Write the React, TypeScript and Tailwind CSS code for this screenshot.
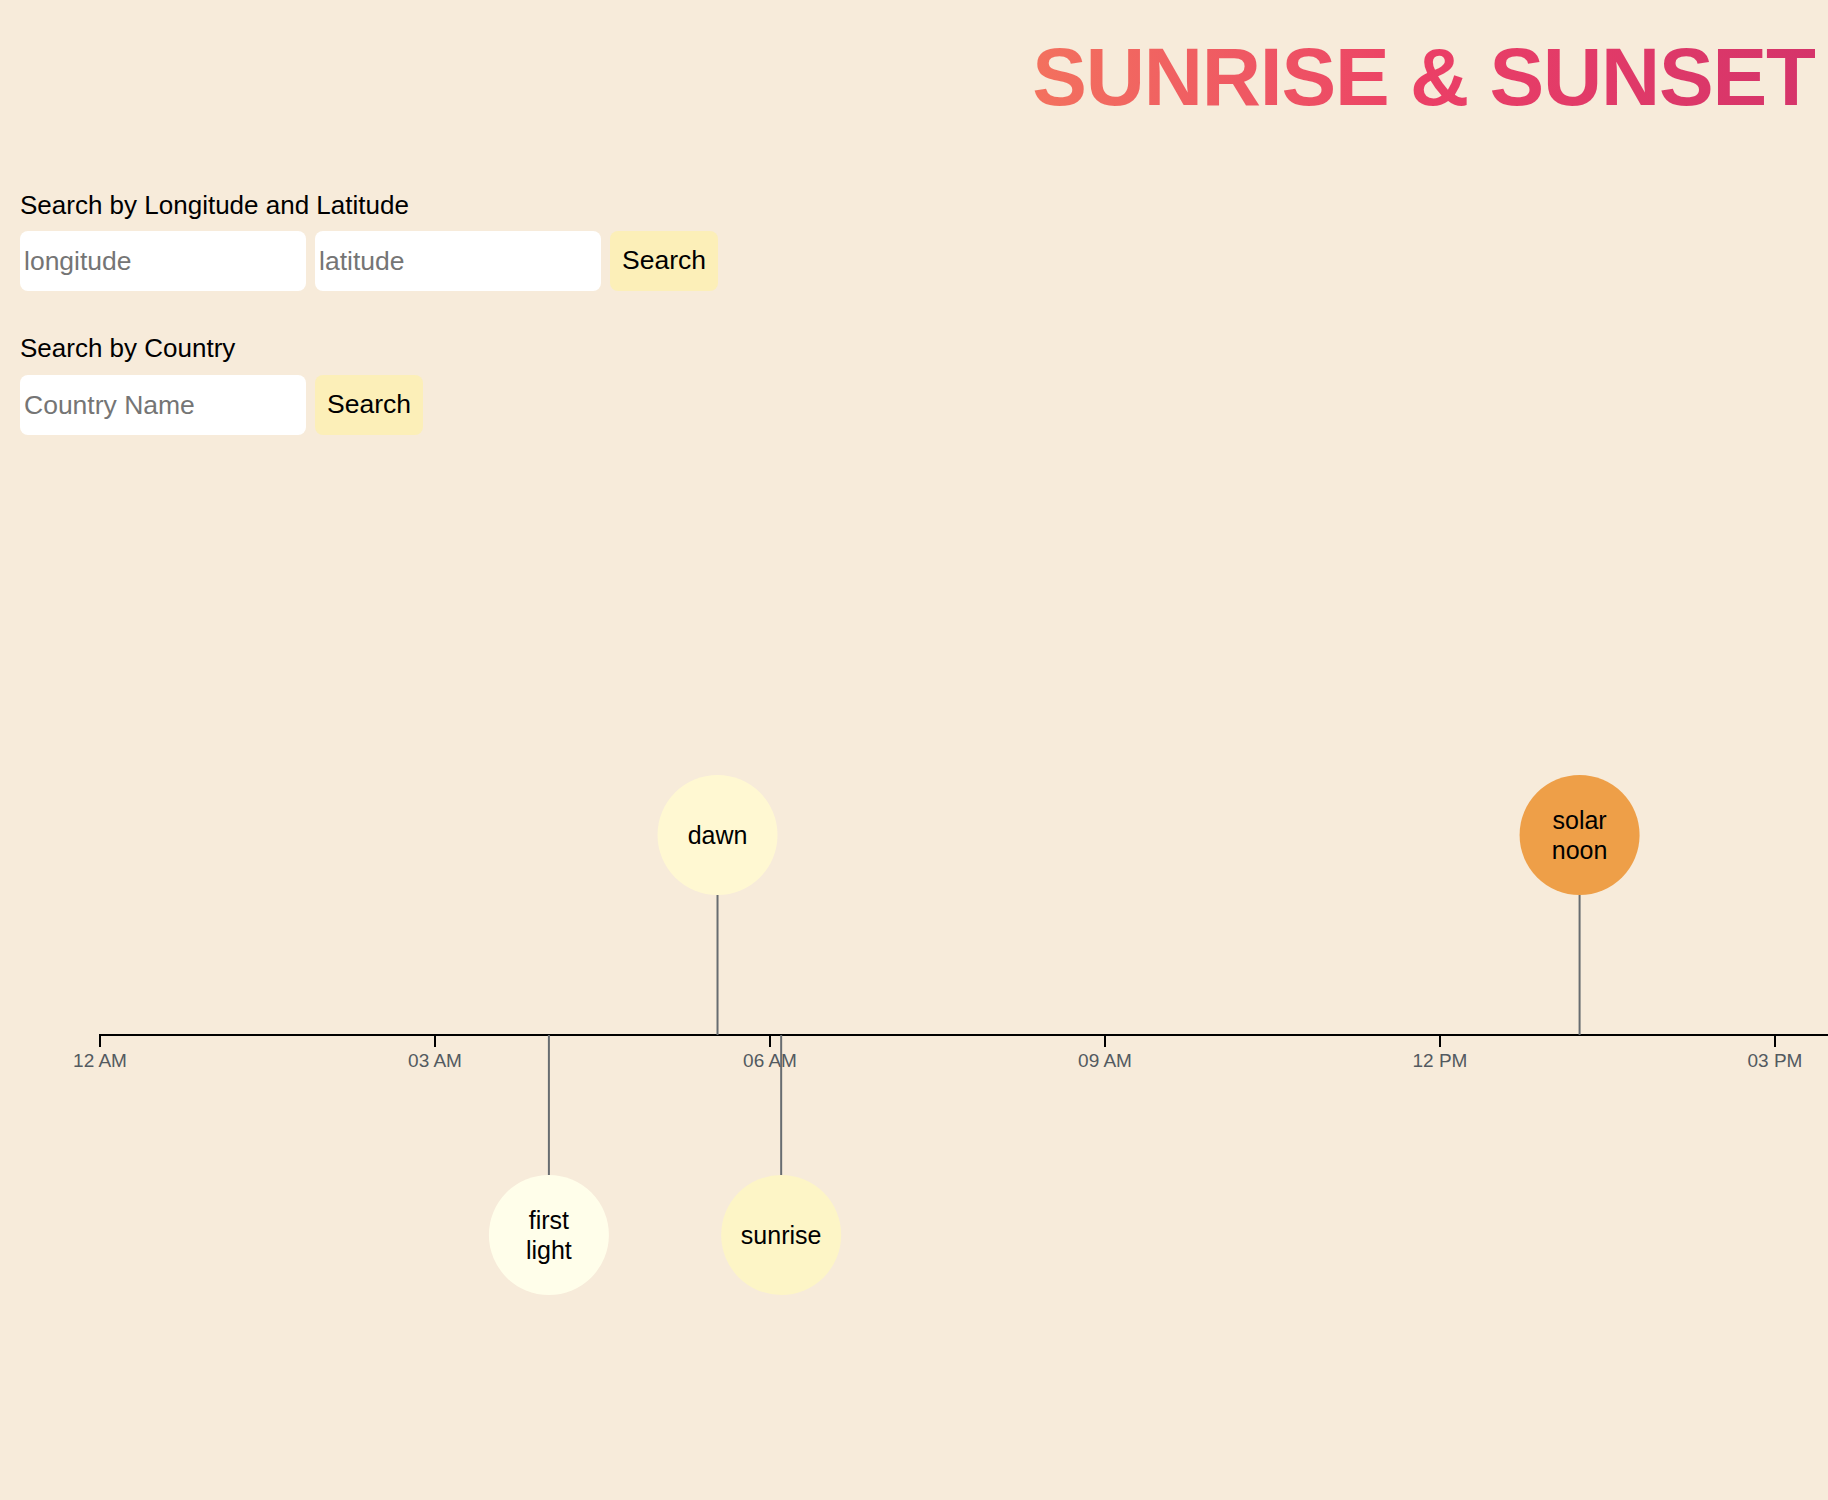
const events = [
  { label: ["first", "light"], hour: 4.02, side: "below", fill: "#fffeea" },
  { label: ["dawn"], hour: 5.53, side: "above", fill: "#fff8d2" },
  { label: ["sunrise"], hour: 6.1, side: "below", fill: "#fdf5c6" },
  { label: ["solar", "noon"], hour: 13.25, side: "above", fill: "#ee9f48" },
];

const ticks = ["12 AM", "03 AM", "06 AM", "09 AM", "12 PM", "03 PM"];

// svg sits at page y=700, axis at y=335 inside it
const AXIS_Y = 335;
const x = (h: number) => 100 + (h * 335) / 3;

function Timeline() {
  return (
    <svg width={1828} height={700} className="block">
      <line x1={99} x2={1828} y1={AXIS_Y} y2={AXIS_Y} stroke="#000" strokeWidth={2} />
      {ticks.map((t, i) => {
        const tx = 100 + i * 335;
        return (
          <g key={t}>
            <line x1={tx} x2={tx} y1={AXIS_Y} y2={AXIS_Y + 12} stroke="#000" strokeWidth={2} />
            <text x={tx} y={AXIS_Y + 32} textAnchor="middle" fontSize={19} fill="#535a60">
              {t}
            </text>
          </g>
        );
      })}
      {events.map((e) => {
        const ex = x(e.hour);
        const cy = e.side === "above" ? AXIS_Y - 200 : AXIS_Y + 200;
        const y1 = e.side === "above" ? cy + 60 : AXIS_Y;
        const y2 = e.side === "above" ? AXIS_Y : cy - 60;
        return (
          <g key={e.label.join(" ")}>
            <line x1={ex} x2={ex} y1={y1} y2={y2} stroke="#676c70" strokeWidth={2} />
            <circle cx={ex} cy={cy} r={60} fill={e.fill} />
            {e.label.length === 1 ? (
              <text x={ex} y={cy + 8.7} textAnchor="middle" fontSize={25} fill="#000">
                {e.label[0]}
              </text>
            ) : (
              <>
                <text x={ex} y={cy - 6} textAnchor="middle" fontSize={25} fill="#000">
                  {e.label[0]}
                </text>
                <text x={ex} y={cy + 24} textAnchor="middle" fontSize={25} fill="#000">
                  {e.label[1]}
                </text>
              </>
            )}
          </g>
        );
      })}
    </svg>
  );
}

export default function App() {
  return (
    <div className="min-h-[1500px] bg-[#f7ebda] font-['Liberation_Sans',Arial,Helvetica,sans-serif] text-black overflow-hidden">
      {/* Header */}
      <header className="flex justify-end pt-[36px] pr-[13px]">
        <h1 className="inline-block bg-linear-to-r from-[#f3715e] via-[#eb3f66] to-[#d5346a] bg-clip-text text-transparent text-[82px] font-bold leading-none tracking-[-1.2px]">
          SUNRISE &amp; SUNSET
        </h1>
      </header>

      {/* Search forms */}
      <div className="px-[20px] mt-[72px]">
        <section>
          <p className="text-[26px] leading-[30px] mb-[11px]">Search by Longitude and Latitude</p>
          <div className="flex gap-[9px]">
            <input
              placeholder="longitude"
              className="w-[286px] h-[60px] rounded-[8px] bg-white pl-[4px] text-[26.5px] placeholder:text-[#757575] outline-none"
            />
            <input
              placeholder="latitude"
              className="w-[286px] h-[60px] rounded-[8px] bg-white pl-[4px] text-[26.5px] placeholder:text-[#757575] outline-none"
            />
            <button className="h-[60px] rounded-[8px] bg-[#fcefb8] px-[12px] text-[26.5px]">Search</button>
          </div>
        </section>

        <section className="mt-[42px]">
          <p className="text-[26px] leading-[30px] mb-[12px]">Search by Country</p>
          <div className="flex gap-[9px]">
            <input
              placeholder="Country Name"
              className="w-[286px] h-[60px] rounded-[8px] bg-white pl-[4px] text-[26.5px] placeholder:text-[#757575] outline-none"
            />
            <button className="h-[60px] rounded-[8px] bg-[#fcefb8] px-[12px] text-[26.5px]">Search</button>
          </div>
        </section>
      </div>

      {/* Chart */}
      <div className="mt-[265px]">
        <Timeline />
      </div>
    </div>
  );
}
